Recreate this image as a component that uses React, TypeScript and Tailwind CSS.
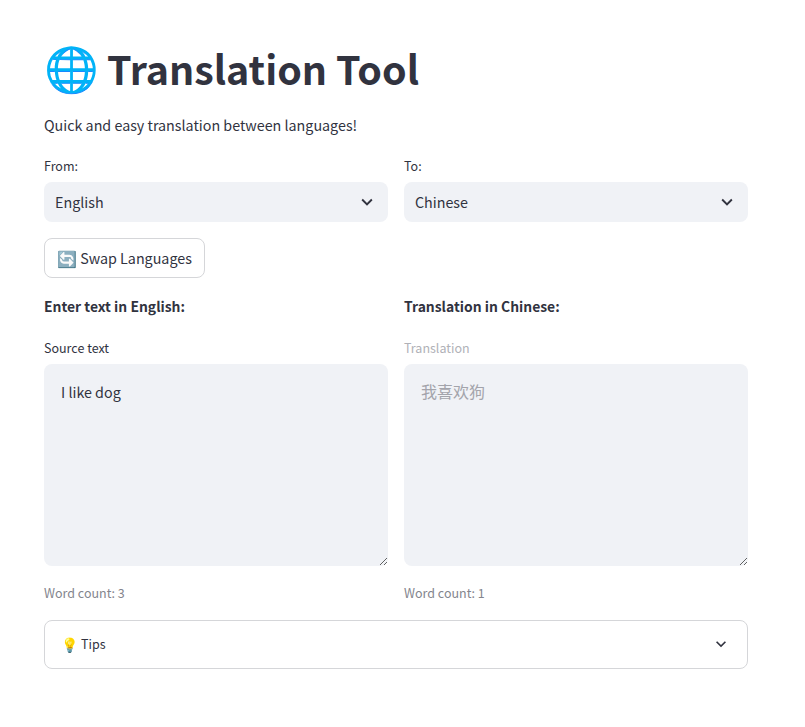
const font = { fontFamily: '"Noto Sans CJK SC", "Noto Sans", sans-serif' };

function Chevron({ className }: { className: string }) {
  return (
    <svg viewBox="0 0 24 24" className={className} fill="currentColor">
      <path d="M16.59 8.59 12 13.17 7.41 8.59 6 10l6 6 6-6z" />
    </svg>
  );
}

function LangSelect({ label, value }: { label: string; value: string }) {
  return (
    <div className="flex flex-col">
      <div className="h-[20px] mb-[6px] text-[12.5px] leading-[20px] text-[#31333f]">{label}</div>
      <div className="h-[40px] rounded-[8px] bg-[#f0f2f6] flex items-center justify-between pl-[11px] pr-[10px]">
        <span className="text-[14.3px] text-[#31333f]">{value}</span>
        <Chevron className="w-[22px] h-[22px] text-[#31333f]" />
      </div>
    </div>
  );
}

function TextColumn({ heading, label, value, count, disabled }: { heading: string; label: string; value: string; count: string; disabled?: boolean }) {
  return (
    <div className="flex flex-col">
      <div className="h-[24px] text-[13.9px] leading-[24px] font-bold text-[#31333f]">{heading}</div>
      <div className={`mt-[20px] h-[20px] mb-[6px] text-[12.5px] leading-[20px] ${disabled ? "text-[#b0b1b7]" : "text-[#31333f]"}`}>{label}</div>
      <textarea
        readOnly
        value={value}
        style={font}
        className={`block w-full h-[202px] rounded-[8px] bg-[#f0f2f6] pl-[17px] pr-[16px] leading-[24px] outline-none resize-y ${disabled ? "pt-[15px] text-[16px] text-[#a3a4ab]" : "pt-[16px] text-[14.3px] text-[#31333f]"}`}
      />
      <div className="mt-[17px] h-[20px] text-[12.5px] leading-[20px] text-[#84858d]">{count}</div>
    </div>
  );
}

export default function App() {
  return (
    <div style={font} className="w-[805px] h-[727px] bg-white pl-[44px] pr-[57px] pt-[39px] overflow-hidden">
      <h1 className="h-[62px] flex items-center gap-[8px] font-bold text-[#31333f]">
        <span className="text-[44px] leading-[62px] -translate-y-[4px]">🌐</span>
        <span className="text-[39.4px] leading-[62px] -translate-y-[2px]">Translation Tool</span>
      </h1>
      <p className="mt-[12px] h-[24px] text-[14.3px] leading-[24px] text-[#31333f]">Quick and easy translation between languages!</p>
      <div className="mt-[19px] grid grid-cols-2 gap-[16px]">
        <LangSelect label="From:" value="English" />
        <LangSelect label="To:" value="Chinese" />
      </div>
      <button className="mt-[16px] h-[40px] w-[161px] rounded-[8px] border border-[#d5d6d9] bg-white flex items-center justify-center gap-[3px] text-[14.3px] text-[#31333f]">
        <span className="text-[16px]">🔄</span>
        <span>Swap Languages</span>
      </button>
      <div className="mt-[16px] grid grid-cols-2 gap-[16px]">
        <TextColumn heading="Enter text in English:" label="Source text" value="I like dog" count="Word count: 3" />
        <TextColumn heading="Translation in Chinese:" label="Translation" value="我喜欢狗" count="Word count: 1" disabled />
      </div>
      <div className="mt-[17px] h-[49px] rounded-[8px] border border-[#d5d6d9] flex items-center justify-between pl-[16px] pr-[16px]">
        <span className="flex items-center gap-[3px] text-[12.5px] text-[#31333f]">
          <span className="text-[14px]">💡</span>
          <span>Tips</span>
        </span>
        <Chevron className="w-[20px] h-[20px] mb-[2px] text-[#31333f]" />
      </div>
    </div>
  );
}
